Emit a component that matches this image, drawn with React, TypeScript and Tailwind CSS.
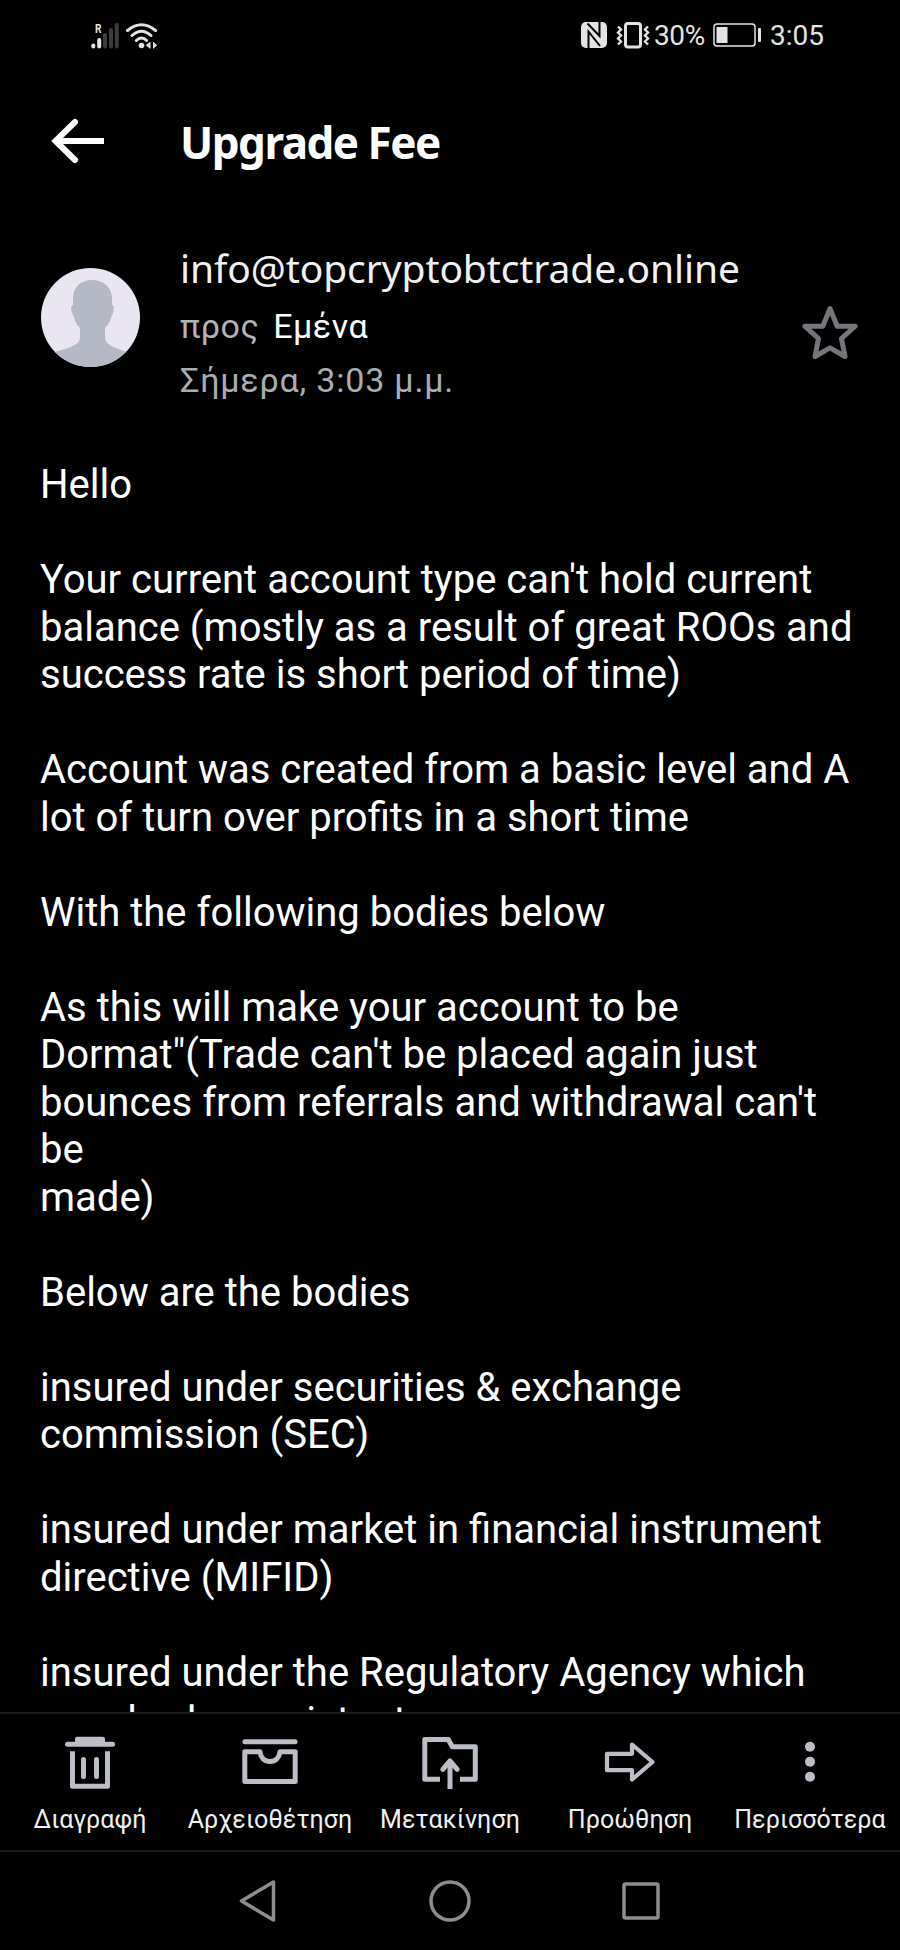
import React from 'react';

// --- TYPE DEFINITIONS ---
interface Action {
    label: string;
    icon: React.ReactNode;
}

// --- MESSAGE CONTENT ---
const BODY_LINES = [
    'Hello',
    '',
    "Your current account type can't hold current",
    'balance (mostly as a result of great ROOs and',
    'success rate is short period of time)',
    '',
    'Account was created from a basic level and A',
    'lot of turn over profits in a short time',
    '',
    'With the following bodies below',
    '',
    'As this will make your account to be',
    'Dormat"(Trade can\'t be placed again just',
    "bounces from referrals and withdrawal can't",
    'be',
    'made)',
    '',
    'Below are the bodies',
    '',
    'insured under securities & exchange',
    'commission (SEC)',
    '',
    'insured under market in financial instrument',
    'directive (MIFID)',
    '',
    'insured under the Regulatory Agency which',
];

// --- TOOLBAR ACTIONS ---
const ACTIONS: Action[] = [
    {
        label: 'Διαγραφή',
        icon: (
            <>
                <path d="M15 13V7q0-2.3 2.3-2.3h25.4q2.3 0 2.3 2.3v6z" fill="currentColor" stroke="none" />
                <path d="M7.5 12.3h45" strokeLinecap="round" />
                <path d="M12.5 19.3v35h35v-35" />
                <path d="M23.5 27.5v17M36.5 27.5v17" strokeLinecap="round" />
            </>
        ),
    },
    {
        label: 'Αρχειοθέτηση',
        icon: (
            <>
                <path d="M5 9.7h50" strokeLinecap="round" />
                <path d="M4.8 19.8H20c.8 6 4.6 9.7 10 9.7s9.2-3.7 10-9.7h15.2v29.7H4.8z" />
            </>
        ),
    },
    {
        label: 'Μετακίνηση',
        icon: (
            <>
                <path d="M20 47.3H4.8V7.5h23.5l4 7.2h23v32.6H40" />
                <path d="M22.8 37.3L30 29l7.2 8.3" strokeLinecap="round" />
                <path d="M30 30v27" />
            </>
        ),
    },
    {
        label: 'Προώθηση',
        icon: <path d="M7 21.8h25v-9.3L52.5 30 32 47.5v-9.3H7z" strokeWidth="4.2" />,
    },
    {
        label: 'Περισσότερα',
        icon: (
            <g fill="currentColor" stroke="none">
                <circle cx="30" cy="14.7" r="5" />
                <circle cx="30" cy="29.7" r="5" />
                <circle cx="30" cy="44.8" r="5" />
            </g>
        ),
    },
];

// --- STATUS BAR ---
const StatusBar = () => (
    <div className="flex h-[70px] items-center justify-between pl-[89px] pr-[76px] text-[#e3e3e3]">
        <svg width="70" height="32" viewBox="0 0 70 32" fill="none">
            <text x="6" y="13.5" fontSize="13" fontWeight="700" fill="currentColor" fontFamily="Roboto" textLength="6.5" lengthAdjust="spacingAndGlyphs">R</text>
            <g strokeWidth="4" strokeLinecap="round">
                <path d="M4.3 26.5v1M10.2 21v6.5" stroke="currentColor" />
                <path d="M16 16v11.5M22 11v16.5M27.8 6v21.5" stroke="#3c3c3c" />
            </g>
            <g stroke="currentColor" strokeWidth="3" strokeLinecap="round">
                <path d="M38.5 11.5q14-11.5 28 0" />
                <path d="M43 16.5q9.5-8.5 19 0" />
                <path d="M47.3 21.5q5.2-5 10.4 0" />
            </g>
            <circle cx="52.5" cy="26.5" r="2.8" fill="currentColor" />
            <path d="M61.5 22.5V30l-4.8-3.7zM64 22.5V30l4.2-3.7z" fill="currentColor" />
        </svg>
        <div className="flex items-center font-[Roboto,sans-serif] text-[28px] leading-none">
            <svg width="26" height="28" viewBox="0 0 26 28" className="mr-[9px]">
                <rect width="26" height="26" y="1" rx="5" fill="currentColor" />
                <path d="M6.5 2.5l12 12.5V1M7.5 27V10.5L19 25" stroke="#000" strokeWidth="2" fill="none" />
            </svg>
            <svg width="34" height="28" viewBox="0 0 34 28" fill="none" stroke="currentColor" className="mr-[4px]">
                <rect x="9.5" y="2.5" width="15" height="23.5" rx="2.5" strokeWidth="3" />
                <path d="M2 5.5l3 3-3 3 3 3-3 3 3 3-3 3M32 5.5l-3 3 3 3-3 3 3 3-3 3 3 3" strokeWidth="2.4" />
            </svg>
            <span className="pt-[2px] tracking-[-0.3px]">30%</span>
            <svg width="50" height="26" viewBox="0 0 50 26" className="ml-[8px] mr-[7px]">
                <rect x="1" y="2" width="41" height="22" rx="3" fill="none" stroke="currentColor" strokeWidth="1.5" />
                <rect x="3.5" y="5" width="11" height="16" fill="currentColor" />
                <rect x="45" y="6" width="3" height="14" rx="1" fill="currentColor" />
            </svg>
            <span className="pt-[2px]">3:05</span>
        </div>
    </div>
);

// --- AVATAR PLACEHOLDER ---
const Avatar = () => (
    <svg width="99" height="99" viewBox="0 0 99 99" className="mt-[38px] shrink-0">
        <clipPath id="avatar">
            <circle cx="49.5" cy="49.5" r="49.5" />
        </clipPath>
        <g clipPath="url(#avatar)">
            <rect width="99" height="99" fill="#e9e6f1" />
            <path
                d="M51 12c-12 0-19 8-19 18v7c-3 0-2 8 1 12 1 5 3 8 6 11v9c0 8-9 10-25 15v15h72V84c-14-5-22-7-22-15v-9c3-3 5-6 6-11 3-4 4-12 1-12v-7c0-10-8-18-20-18z"
                fill="#b5b8c5"
            />
        </g>
    </svg>
);

// --- TITLE + SENDER ---
const Header = () => (
    <header className="font-['Noto_Sans',sans-serif]">
        <div className="flex h-[142px] items-center pl-[50px]">
            <svg width="56" height="50" viewBox="0 0 56 50" fill="none" stroke="#fff" strokeWidth="6">
                <path d="M54 25H6" />
                <path d="M25 6L5.5 25 25 44" strokeLinecap="round" />
            </svg>
            <h1 className="ml-[74px] mt-[2px] whitespace-nowrap text-[44px] font-bold leading-none tracking-[-1.5px]">Upgrade Fee</h1>
        </div>
        <div className="flex h-[238px] pl-[41px] pr-[40px] pt-[18px]">
            <Avatar />
            <div className="ml-[40px] flex-1 whitespace-nowrap">
                <div className="h-[69px] pt-[13px] text-[39px] leading-[50px] tracking-[-0.1px] text-[#f1f1f1]">info@topcryptobtctrade.online</div>
                <div className="flex h-[54px] gap-[14px] font-[Roboto,sans-serif] text-[34px] leading-[54px] tracking-[0.5px]">
                    <span className="text-[#b0b3b8]">προς</span>
                    <span className="text-white">Εμένα</span>
                </div>
                <div className="font-[Roboto,sans-serif] text-[34px] leading-[54px] tracking-[0.8px] text-[#a9acb1]">Σήμερα, 3:03 μ.μ.</div>
            </div>
            <svg width="60" height="60" viewBox="0 0 60 60" fill="none" stroke="#73777c" strokeWidth="5" strokeLinejoin="round" className="mt-[72px] shrink-0">
                <path d="M30 6.5l7.2 17.7h18L41.5 36.5 45 54.5l-15-8.7-15 8.7 3.5-18L4.8 24.2h18z" />
            </svg>
        </div>
    </header>
);

// --- MESSAGE BODY ---
const MessageBody = () => (
    <main className="h-[1262px] overflow-hidden pl-[40px] pt-[11px] font-[Roboto,sans-serif] text-[40px] leading-[47.5px]">
        {BODY_LINES.map((line, idx) => (
            <p key={idx} className="h-[47.5px] whitespace-pre">{line}</p>
        ))}
        {/* Last line runs under the toolbar */}
        <p className="mt-[1.5px] h-[47.5px] whitespace-pre">
            user <span className="tracking-[1.3px]">had</span>
            <span className="[word-spacing:2px]"> a assistant</span>
        </p>
    </main>
);

// --- BOTTOM TOOLBAR ---
const Toolbar = () => (
    <div className="grid h-[138px] grid-cols-5 border-t-2 border-[#1b1b1b] pt-[18px]">
        {ACTIONS.map((action) => (
            <div key={action.label} className="flex flex-col items-center text-[#bbbdc7]">
                <svg width="60" height="60" viewBox="0 0 60 60" fill="none" stroke="currentColor" strokeWidth="5" strokeLinejoin="round">
                    {action.icon}
                </svg>
                <span className="mt-[11px] whitespace-nowrap font-[Roboto,sans-serif] text-[25px] leading-[34px] tracking-[0.1px] text-[#f0f0f0]">
                    {action.label}
                </span>
            </div>
        ))}
    </div>
);

// --- SYSTEM NAVIGATION ---
const NavBar = () => (
    <div className="flex h-[100px] items-center justify-center gap-[150px] border-t-2 border-[#1b1b1b]">
        <svg width="42" height="44" viewBox="0 0 42 44" fill="none" stroke="#8d8d8d" strokeWidth="3.5" strokeLinejoin="round">
            <path d="M36.5 3v38l-32-19z" />
        </svg>
        <svg width="42" height="44" viewBox="0 0 42 44" fill="none" stroke="#8d8d8d" strokeWidth="3.5">
            <circle cx="21" cy="22" r="19" />
        </svg>
        <svg width="42" height="44" viewBox="0 0 42 44" fill="none" stroke="#8d8d8d" strokeWidth="3.5">
            <rect x="3" y="5" width="34" height="34" rx="1.5" />
        </svg>
    </div>
);

export default function App() {
    return (
        <div className="flex h-[1950px] w-[900px] flex-col overflow-hidden bg-black text-white">
            <StatusBar />
            <Header />
            <MessageBody />
            <Toolbar />
            <NavBar />
        </div>
    );
}
